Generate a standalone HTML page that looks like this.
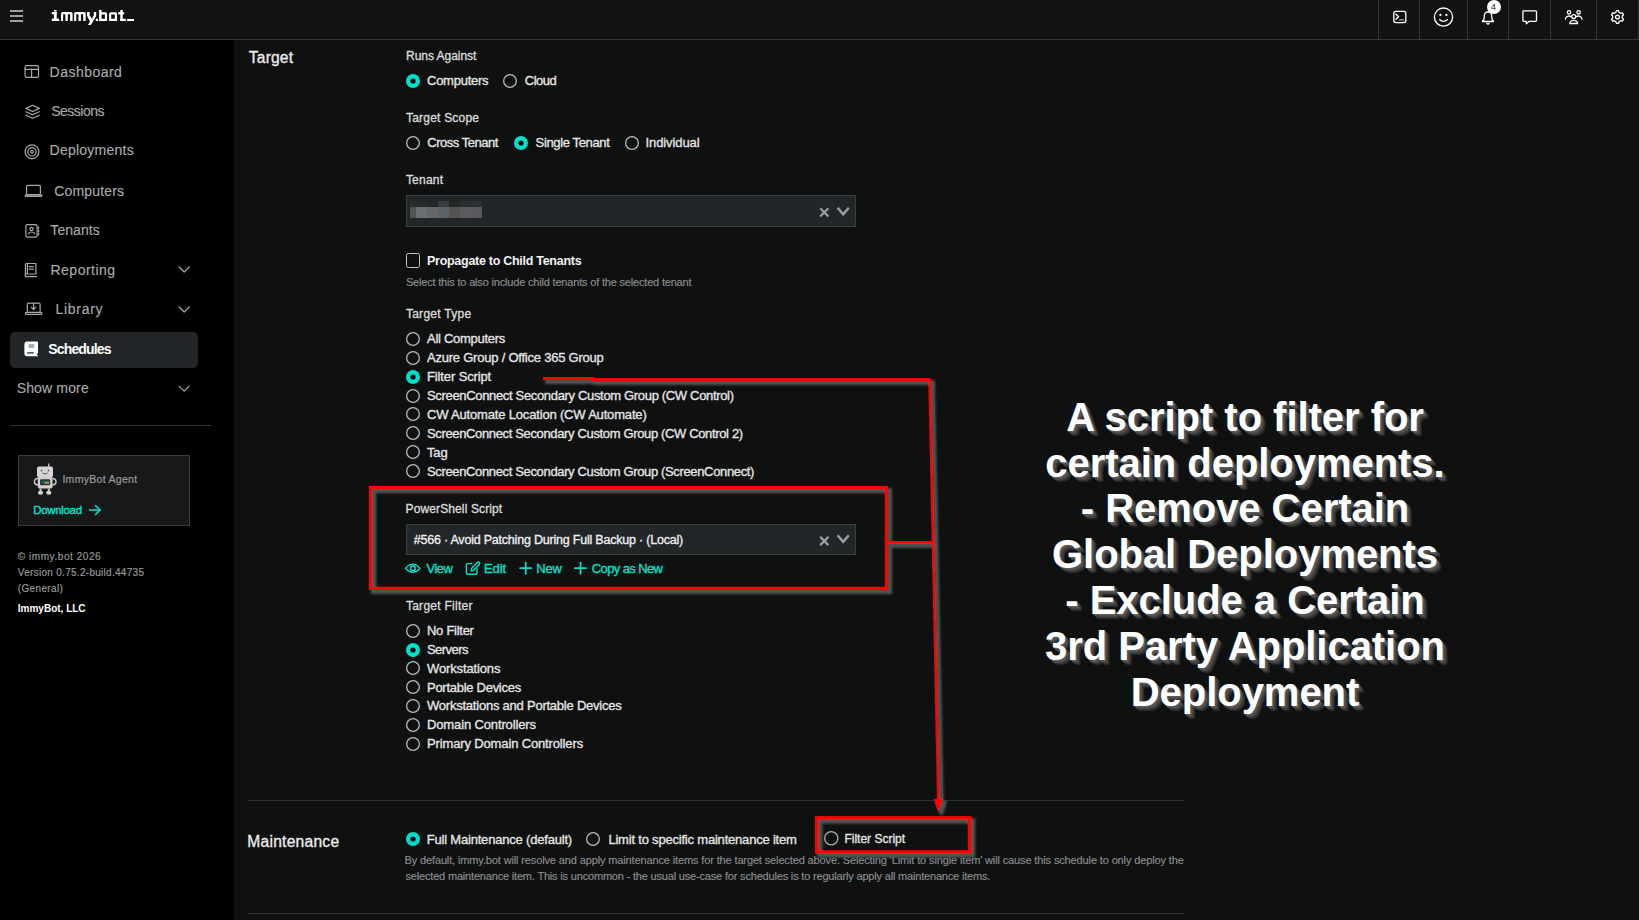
<!DOCTYPE html><html><head><meta charset="utf-8"><style>
html,body{margin:0;padding:0}
body{width:1639px;height:920px;overflow:hidden;position:relative;background:#0f1111;font-family:"Liberation Sans",sans-serif}
.t{position:absolute;white-space:nowrap;font-family:"Liberation Sans",sans-serif}
svg{position:absolute;overflow:visible}
</style></head><body>
<div style='position:absolute;left:0;top:0;width:1639px;height:39px;background:#111313'></div>
<div style='position:absolute;left:0;top:39px;width:1639px;height:1px;background:#333537'></div>
<div style='position:absolute;left:1378px;top:0;width:1px;height:39px;background:#333537'></div>
<div style='position:absolute;left:1419px;top:0;width:1px;height:39px;background:#333537'></div>
<div style='position:absolute;left:1467px;top:0;width:1px;height:39px;background:#333537'></div>
<div style='position:absolute;left:1508px;top:0;width:1px;height:39px;background:#333537'></div>
<div style='position:absolute;left:1550px;top:0;width:1px;height:39px;background:#333537'></div>
<div style='position:absolute;left:1596px;top:0;width:1px;height:39px;background:#333537'></div>
<div style='position:absolute;left:1638px;top:0;width:1px;height:39px;background:#333537'></div>
<svg style='left:0;top:0' width='40' height='39'><g stroke='#e0e0e0' stroke-width='1.4'><line x1='10' y1='11' x2='23' y2='11'/><line x1='10' y1='16' x2='23' y2='16'/><line x1='10' y1='21' x2='23' y2='21'/></g></svg>
<svg style='left:0;top:0' width='140' height='39'><g fill='#ffffff'><rect x='54' y='10' width='2.6' height='1.5'/><rect x='51.8' y='12' width='4.9' height='2.3'/><rect x='53.9' y='12' width='2.8' height='7.5'/><rect x='51.8' y='18.6' width='7.3' height='2.4'/><path d='M61 21 V13.6 a1.6 1.6 0 0 1 1.6 -1.6 H71 a1.6 1.6 0 0 1 1.6 1.6 V21 h-2.5 V14.3 h-2.3 V21 h-2.4 V14.3 h-2.3 V21 z'/><path d='M74.1 21 V13.6 a1.6 1.6 0 0 1 1.6 -1.6 H84.1 a1.6 1.6 0 0 1 1.6 1.6 V21 h-2.5 V14.3 h-2.3 V21 h-2.4 V14.3 h-2.3 V21 z'/><path d='M87 12 h2.6 v3.2 l2.2 3.6 l2 -3.6 V12 h2.4 v3.8 l-3.2 5.6 l-2.2 3.6 h-2.8 l2 -3.6 l-3 -5.6 z'/><rect x='95.8' y='18.7' width='2.2' height='2.3'/><path d='M99.1 10 h2.5 v2.2 h4 a1.5 1.5 0 0 1 1.5 1.5 V21 H99.1 z M101.6 14.4 v4.4 h3.3 v-4.4 z' fill-rule='evenodd'/><path d='M110.6 12.2 h4.9 a1.5 1.5 0 0 1 1.5 1.5 V21 h-7.9 V13.7 a1.5 1.5 0 0 1 1.5 -1.5 z M111.2 14.4 v4.4 h3.6 v-4.4 z' fill-rule='evenodd'/><rect x='120.3' y='10' width='2.4' height='11'/><rect x='118.1' y='12.2' width='6' height='2.2'/><rect x='120.3' y='18.8' width='5.5' height='2.2'/><rect x='127.1' y='19' width='6.9' height='2'/></g></svg>
<svg style='left:1380px;top:0' width='259' height='39' fill='none' stroke='#ffffff' stroke-width='1.3' stroke-linecap='round' stroke-linejoin='round'>
<rect x='13.8' y='11.3' width='12' height='11.3' rx='2'/>
<polyline points='15.9,14.2 18.6,16.7 15.9,19.2'/>
<line x1='19.8' y1='19.8' x2='23.5' y2='19.8' stroke='#bbbbbb'/>
<circle cx='63.5' cy='17.1' r='9.1'/>
<circle cx='60.4' cy='15' r='0.5' fill='#fff'/><circle cx='66.4' cy='15' r='0.5' fill='#fff'/>
<path d='M59.6 19.6 Q63.5 23.2 67.4 19.6'/>
<path d='M102.5 21.5 h11 c-1.3-1.3-1.8-2.6-1.8-4.5 v-1.3 a3.7 3.7 0 0 0 -7.4 0 v1.3 c0 1.9 -0.5 3.2 -1.8 4.5 z'/>
<path d='M106.8 23.3 l1.2 1 l1.2 -1'/>
<path d='M143.7 10.8 h12 a0.8 0.8 0 0 1 0.8 0.8 v9 a0.8 0.8 0 0 1 -0.8 0.8 h-6.8 l-2.6 2.3 v-2.3 h-2.6 a0.8 0.8 0 0 1 -0.8 -0.8 v-9 a0.8 0.8 0 0 1 0.8 -0.8 z'/>
<circle cx='193.7' cy='16.6' r='2'/><path d='M189.8 23.5 a3.9 3.2 0 0 1 7.8 0 z'/>
<circle cx='189' cy='12.3' r='1.7'/><path d='M185.4 19 a3.6 3.4 0 0 1 5.6 -2.4'/>
<circle cx='198.6' cy='12.3' r='1.7'/><path d='M202 19 a3.6 3.4 0 0 0 -5.6 -2.4'/>
<circle cx='237.5' cy='17' r='1.9'/>
</svg>
<svg style='left:0;top:0' width='1639' height='39' fill='none' stroke='#ffffff' stroke-width='1.3' stroke-linejoin='round'><polygon points='1615.90,12.37 1616.39,10.70 1618.61,10.70 1619.10,12.37 1620.71,13.30 1622.40,12.89 1623.51,14.81 1622.31,16.07 1622.31,17.93 1623.51,19.19 1622.40,21.11 1620.71,20.70 1619.10,21.63 1618.61,23.30 1616.39,23.30 1615.90,21.63 1614.29,20.70 1612.60,21.11 1611.49,19.19 1612.69,17.93 1612.69,16.07 1611.49,14.81 1612.60,12.89 1614.29,13.30'/></svg>
<div style='position:absolute;left:1487px;top:-0.5px;width:14px;height:14px;border-radius:50%;background:#ffffff'></div>
<div class='t' style='left:1490.8px;top:2.4px;font-size:9.5px;line-height:9.5px;color:#2a2a2a'>4</div>
<div style='position:absolute;left:0;top:40px;width:234px;height:880px;background:#000'></div>
<svg style='left:0;top:40px' width='234' height='880' fill='none' stroke='#a9a9a9' stroke-width='1.2' stroke-linecap='round' stroke-linejoin='round'>
<g transform='translate(0,-40)'>
<rect x='25.1' y='65.6' width='13.4' height='11.8' rx='1.6'/><line x1='25.1' y1='69.4' x2='38.5' y2='69.4'/><line x1='31.6' y1='69.4' x2='31.6' y2='77.4'/>
<path d='M32.6 105.3 L39.3 108.4 L32.6 111.5 L25.9 108.4 Z'/>
<path d='M25.9 111.7 L32.6 114.8 L39.3 111.7'/>
<path d='M25.9 115.2 L32.6 118.3 L39.3 115.2'/>
<circle cx='32' cy='151.8' r='6.9'/><circle cx='32' cy='151.8' r='4.2'/><circle cx='32' cy='151.8' r='1.3'/>
<rect x='26.6' y='185.3' width='13.8' height='9.2' rx='1.2'/><rect x='25.2' y='194.8' width='16.8' height='1.6' rx='0.8'/>
<rect x='25.9' y='224.6' width='11.2' height='12.6' rx='1.5'/><line x1='38.6' y1='227' x2='38.6' y2='228.6'/><line x1='38.6' y1='230.2' x2='38.6' y2='231.8'/><line x1='38.6' y1='233.4' x2='38.6' y2='235'/>
<circle cx='31.5' cy='228.9' r='1.6'/><path d='M28.5 233.8 a3.2 2.4 0 0 1 6.2 0'/>
<path d='M25.4 274.5 V264.5 a1 1 0 0 1 1 -1 h9.5 v10.5 h-9.5 a1 1 0 0 0 0 2.6 h10.1'/><line x1='27.4' y1='263.5' x2='27.4' y2='273.6'/><line x1='29.2' y1='266.6' x2='33.4' y2='266.6'/><line x1='29.2' y1='269.2' x2='33.4' y2='269.2'/>
<path d='M27.3 311.6 V304.4 a1.2 1.2 0 0 1 1.2 -1.2 h10.4 a1.2 1.2 0 0 1 1.2 1.2 V311.6'/><rect x='25.4' y='312.4' width='16.6' height='2' rx='1'/>
<line x1='33.6' y1='303.4' x2='33.6' y2='309.4'/><polyline points='31.3,307.2 33.6,309.5 35.9,307.2'/>
<polyline points='179.2,267 184.2,272 189.2,267'/>
<polyline points='179.2,307 184.2,312 189.2,307'/>
<polyline points='179.2,386.2 184.2,391.2 189.2,386.2'/>
</g></svg>
<div style='position:absolute;left:10px;top:332px;width:188px;height:36px;border-radius:5px;background:#222527'></div>
<svg style='left:0;top:330px' width='60' height='40'><g transform='translate(0,-330)'>
<path d='M26.8 341.6 h10.4 a0.8 0.8 0 0 1 0.8 0.8 v11.2 h-1 v1.6 h1 v1 h-11 a2.6 2.6 0 0 1 -2.6 -2.6 v-9.4 a2.6 2.6 0 0 1 2.4 -2.6 z' fill='#ffffff'/>
<rect x='28.5' y='344.6' width='5.8' height='0.9' fill='#4a4d4f'/><rect x='28.5' y='346.6' width='5.8' height='0.9' fill='#4a4d4f'/>
<rect x='27.1' y='352.3' width='6.8' height='1.3' rx='0.6' fill='#222527'/>
</g></svg>
<div style='position:absolute;left:10px;top:425px;width:202px;height:1px;background:#2f3133'></div>
<div style='position:absolute;left:18px;top:455px;width:170px;height:69px;border:1px solid #3a3b3d;background:#17181a'></div>
<svg style='left:0;top:455px' width='80' height='50'><g transform='translate(0,-455)'>
<line x1='48.8' y1='463.5' x2='48.8' y2='467.5' stroke='#cfcfcf' stroke-width='1.3'/>
<rect x='37' y='466.6' width='16' height='10.6' rx='2' fill='#d6d6d6'/>
<circle cx='41.6' cy='470.6' r='0.8' fill='#333'/><circle cx='48.4' cy='470.6' r='0.8' fill='#333'/>
<path d='M42.4 473 Q45 475 47.6 473' stroke='#333' stroke-width='0.8' fill='none'/>
<rect x='37.8' y='476.6' width='14.8' height='12' rx='2.2' fill='#d0d0d0'/>
<path d='M38 478.2 q-3.8 0.6 -3.6 4.2 q0.2 2.4 3.6 2.6' stroke='#c4c4c4' stroke-width='1.5' fill='none'/>
<path d='M52.4 478.2 q3.8 0.6 3.6 4.2 q-0.2 2.4 -3.6 2.6' stroke='#c4c4c4' stroke-width='1.5' fill='none'/>
<rect x='40' y='479.3' width='10.2' height='6' rx='1.2' fill='#20393c'/>
<rect x='44.6' y='481.6' width='4.4' height='1.2' fill='#9fbf5a'/><rect x='44.6' y='482.8' width='4.4' height='1.2' fill='#d9584e'/>
<path d='M41.5 483 l1.5 -1.6 l1.2 1' stroke='#4dd0c0' stroke-width='0.6' fill='none'/>
<ellipse cx='40.5' cy='492.8' rx='2.6' ry='2' fill='#d6d6d6'/><ellipse cx='48.8' cy='492.8' rx='2.6' ry='2' fill='#d6d6d6'/>
<rect x='39.5' y='488.5' width='2.2' height='3' fill='#bdbdbd'/><rect x='47.8' y='488.5' width='2.2' height='3' fill='#bdbdbd'/>
</g></svg>
<svg style='left:0;top:500px' width='120' height='20' fill='none' stroke='#00e0c9' stroke-width='1.5' stroke-linecap='round' stroke-linejoin='round'><g transform='translate(0,-500)'>
<line x1='89.6' y1='510' x2='100.2' y2='510'/><polyline points='95.6,505.6 100.2,510 95.6,514.4'/></g></svg>
<svg style='left:404.00px;top:72.00px' width='18' height='18'><circle cx='9.0' cy='9.0' r='7.0' fill='#00e0c9'/><circle cx='9.0' cy='9.0' r='2.6' fill='#000'/></svg>
<svg style='left:501.40px;top:72.00px' width='18' height='18'><circle cx='9.0' cy='9.0' r='6.35' fill='none' stroke='#b6bac0' stroke-width='1.3'/></svg>
<svg style='left:404.00px;top:133.75px' width='18' height='18'><circle cx='9.0' cy='9.0' r='6.35' fill='none' stroke='#b6bac0' stroke-width='1.3'/></svg>
<svg style='left:512.00px;top:133.75px' width='18' height='18'><circle cx='9.0' cy='9.0' r='7.0' fill='#00e0c9'/><circle cx='9.0' cy='9.0' r='2.6' fill='#000'/></svg>
<svg style='left:622.90px;top:133.75px' width='18' height='18'><circle cx='9.0' cy='9.0' r='6.35' fill='none' stroke='#b6bac0' stroke-width='1.3'/></svg>
<svg style='left:404.00px;top:330.00px' width='18' height='18'><circle cx='9.0' cy='9.0' r='6.35' fill='none' stroke='#b6bac0' stroke-width='1.3'/></svg>
<svg style='left:404.00px;top:348.86px' width='18' height='18'><circle cx='9.0' cy='9.0' r='6.35' fill='none' stroke='#b6bac0' stroke-width='1.3'/></svg>
<svg style='left:404.00px;top:367.72px' width='18' height='18'><circle cx='9.0' cy='9.0' r='7.0' fill='#00e0c9'/><circle cx='9.0' cy='9.0' r='2.6' fill='#000'/></svg>
<svg style='left:404.00px;top:386.58px' width='18' height='18'><circle cx='9.0' cy='9.0' r='6.35' fill='none' stroke='#b6bac0' stroke-width='1.3'/></svg>
<svg style='left:404.00px;top:405.44px' width='18' height='18'><circle cx='9.0' cy='9.0' r='6.35' fill='none' stroke='#b6bac0' stroke-width='1.3'/></svg>
<svg style='left:404.00px;top:424.30px' width='18' height='18'><circle cx='9.0' cy='9.0' r='6.35' fill='none' stroke='#b6bac0' stroke-width='1.3'/></svg>
<svg style='left:404.00px;top:443.16px' width='18' height='18'><circle cx='9.0' cy='9.0' r='6.35' fill='none' stroke='#b6bac0' stroke-width='1.3'/></svg>
<svg style='left:404.00px;top:462.02px' width='18' height='18'><circle cx='9.0' cy='9.0' r='6.35' fill='none' stroke='#b6bac0' stroke-width='1.3'/></svg>
<svg style='left:404.00px;top:621.70px' width='18' height='18'><circle cx='9.0' cy='9.0' r='6.35' fill='none' stroke='#b6bac0' stroke-width='1.3'/></svg>
<svg style='left:404.00px;top:640.55px' width='18' height='18'><circle cx='9.0' cy='9.0' r='7.0' fill='#00e0c9'/><circle cx='9.0' cy='9.0' r='2.6' fill='#000'/></svg>
<svg style='left:404.00px;top:659.40px' width='18' height='18'><circle cx='9.0' cy='9.0' r='6.35' fill='none' stroke='#b6bac0' stroke-width='1.3'/></svg>
<svg style='left:404.00px;top:678.25px' width='18' height='18'><circle cx='9.0' cy='9.0' r='6.35' fill='none' stroke='#b6bac0' stroke-width='1.3'/></svg>
<svg style='left:404.00px;top:697.10px' width='18' height='18'><circle cx='9.0' cy='9.0' r='6.35' fill='none' stroke='#b6bac0' stroke-width='1.3'/></svg>
<svg style='left:404.00px;top:715.95px' width='18' height='18'><circle cx='9.0' cy='9.0' r='6.35' fill='none' stroke='#b6bac0' stroke-width='1.3'/></svg>
<svg style='left:404.00px;top:734.80px' width='18' height='18'><circle cx='9.0' cy='9.0' r='6.35' fill='none' stroke='#b6bac0' stroke-width='1.3'/></svg>
<svg style='left:404.00px;top:830.30px' width='18' height='18'><circle cx='9.0' cy='9.0' r='7.0' fill='#00e0c9'/><circle cx='9.0' cy='9.0' r='2.6' fill='#000'/></svg>
<svg style='left:584.00px;top:830.30px' width='18' height='18'><circle cx='9.0' cy='9.0' r='6.35' fill='none' stroke='#b6bac0' stroke-width='1.3'/></svg>
<div style='position:absolute;left:406px;top:195px;width:450px;height:32px;box-sizing:border-box;border:1px solid #3a3e40;background:#222628'></div>
<div style='position:absolute;left:409.8px;top:201px;width:6.199999999999989px;height:6px;background:#2a2e2f'></div>
<div style='position:absolute;left:409.8px;top:207px;width:6.199999999999989px;height:10.7px;background:#4f5452'></div>
<div style='position:absolute;left:416px;top:201px;width:11px;height:6px;background:#272b2c'></div>
<div style='position:absolute;left:416px;top:207px;width:11px;height:10.7px;background:#6a6f72'></div>
<div style='position:absolute;left:427px;top:201px;width:11px;height:6px;background:#232728'></div>
<div style='position:absolute;left:427px;top:207px;width:11px;height:10.7px;background:#666766'></div>
<div style='position:absolute;left:438px;top:201px;width:11px;height:6px;background:#393d40'></div>
<div style='position:absolute;left:438px;top:207px;width:11px;height:10.7px;background:#5c6266'></div>
<div style='position:absolute;left:449px;top:201px;width:11px;height:6px;background:#232728'></div>
<div style='position:absolute;left:449px;top:207px;width:11px;height:10.7px;background:#555450'></div>
<div style='position:absolute;left:460px;top:201px;width:11px;height:6px;background:#2a2e2f'></div>
<div style='position:absolute;left:460px;top:207px;width:11px;height:10.7px;background:#5c5b60'></div>
<div style='position:absolute;left:471px;top:201px;width:11px;height:6px;background:#2e3133'></div>
<div style='position:absolute;left:471px;top:207px;width:11px;height:10.7px;background:#58595b'></div>
<svg style='left:0;top:0' width='1639' height='920' fill='none' stroke='#9d9d9d' stroke-width='2.3' stroke-linecap='butt'><line x1='820.2' y1='208.3' x2='828.4' y2='216.5'/><line x1='828.4' y1='208.3' x2='820.2' y2='216.5'/><polyline points='837.6,207.8 843.2,214.4 848.8,207.8' stroke-width='2.5'/></svg>
<div style='position:absolute;left:406px;top:253px;width:14px;height:15px;box-sizing:border-box;border:1.3px solid #c4c4c4;border-radius:2.5px'></div>
<div style='position:absolute;left:406px;top:524px;width:450px;height:31px;box-sizing:border-box;border:1px solid #3a3e40;background:#222628'></div>
<svg style='left:0;top:0' width='1639' height='920' fill='none' stroke='#9d9d9d' stroke-width='2.3' stroke-linecap='butt'><line x1='820.2' y1='536.9' x2='828.4' y2='545.1'/><line x1='828.4' y1='536.9' x2='820.2' y2='545.1'/><polyline points='837.6,535.3 843.2,541.9 848.8,535.3' stroke-width='2.5'/></svg>
<svg style='left:0;top:0' width='1639' height='920' fill='none' stroke='#00e0c9' stroke-width='1.4' stroke-linecap='round' stroke-linejoin='round'>
<path d='M405.6 568.2 Q412.8 560 420 568.2 Q412.8 576.4 405.6 568.2 Z'/><circle cx='412.8' cy='568.2' r='2.4'/>
<path d='M472 563.6 h-4.6 a1 1 0 0 0 -1 1 v8.6 a1 1 0 0 0 1 1 h8.6 a1 1 0 0 0 1 -1 v-4.6'/>
<path d='M477.4 562.4 a1.4 1.4 0 0 1 2 2 l-5.8 5.8 l-2.6 0.7 l0.7 -2.6 z'/>
<g stroke-width='1.8'><line x1='525.7' y1='562.6' x2='525.7' y2='573.8'/><line x1='520.1' y1='568.2' x2='531.3' y2='568.2'/>
<line x1='580.5' y1='562.6' x2='580.5' y2='573.8'/><line x1='574.9' y1='568.2' x2='586.1' y2='568.2'/></g>
</svg>
<div class='t' style='left:49.60px;top:65.14px;font-size:14px;line-height:14px;font-weight:400;color:#a9a9a9;letter-spacing:0.475px;-webkit-text-stroke:0.15px #a9a9a9'>Dashboard</div>
<div class='t' style='left:51.20px;top:104.34px;font-size:14px;line-height:14px;font-weight:400;color:#a9a9a9;letter-spacing:-0.5px;-webkit-text-stroke:0.15px #a9a9a9'>Sessions</div>
<div class='t' style='left:49.60px;top:143.44px;font-size:14px;line-height:14px;font-weight:400;color:#a9a9a9;letter-spacing:0.24px;-webkit-text-stroke:0.15px #a9a9a9'>Deployments</div>
<div class='t' style='left:54.20px;top:183.74px;font-size:14px;line-height:14px;font-weight:400;color:#a9a9a9;letter-spacing:0.162px;-webkit-text-stroke:0.15px #a9a9a9'>Computers</div>
<div class='t' style='left:50.30px;top:223.14px;font-size:14px;line-height:14px;font-weight:400;color:#a9a9a9;letter-spacing:0.083px;-webkit-text-stroke:0.15px #a9a9a9'>Tenants</div>
<div class='t' style='left:50.50px;top:263.14px;font-size:14px;line-height:14px;font-weight:400;color:#a9a9a9;letter-spacing:0.487px;-webkit-text-stroke:0.15px #a9a9a9'>Reporting</div>
<div class='t' style='left:55.50px;top:301.94px;font-size:14px;line-height:14px;font-weight:400;color:#a9a9a9;letter-spacing:0.717px;-webkit-text-stroke:0.15px #a9a9a9'>Library</div>
<div class='t' style='left:48.30px;top:342.04px;font-size:14px;line-height:14px;font-weight:700;color:#ffffff;letter-spacing:-0.862px;'>Schedules</div>
<div class='t' style='left:16.70px;top:380.94px;font-size:14px;line-height:14px;font-weight:400;color:#a9a9a9;letter-spacing:0.15px;-webkit-text-stroke:0.15px #a9a9a9'>Show more</div>
<div class='t' style='left:62.40px;top:473.91px;font-size:10.5px;line-height:10.5px;font-weight:400;color:#a0a0a0;letter-spacing:0.292px;-webkit-text-stroke:0.15px #a0a0a0'>ImmyBot Agent</div>
<div class='t' style='left:33.20px;top:504.96px;font-size:11.5px;line-height:11.5px;font-weight:400;color:#00e0c9;letter-spacing:-0.329px;-webkit-text-stroke:0.35px #00e0c9'>Download</div>
<div class='t' style='left:17.80px;top:552.03px;font-size:10px;line-height:10px;font-weight:400;color:#9a9a9a;letter-spacing:0.557px;-webkit-text-stroke:0.15px #9a9a9a'>© immy.bot 2026</div>
<div class='t' style='left:17.80px;top:568.03px;font-size:10px;line-height:10px;font-weight:400;color:#9a9a9a;letter-spacing:0.288px;-webkit-text-stroke:0.15px #9a9a9a'>Version 0.75.2-build.44735</div>
<div class='t' style='left:17.80px;top:584.13px;font-size:10px;line-height:10px;font-weight:400;color:#9a9a9a;letter-spacing:0.35px;-webkit-text-stroke:0.15px #9a9a9a'>(General)</div>
<div class='t' style='left:17.80px;top:604.33px;font-size:10px;line-height:10px;font-weight:700;color:#ffffff;letter-spacing:0.0px;'>ImmyBot, LLC</div>
<div class='t' style='left:248.80px;top:49.59px;font-size:15.6px;line-height:15.6px;font-weight:400;color:#ececec;letter-spacing:0.18px;-webkit-text-stroke:0.32px #ececec'>Target</div>
<div class='t' style='left:406.00px;top:50.04px;font-size:12px;line-height:12px;font-weight:400;color:#dcdcdc;letter-spacing:-0.027px;-webkit-text-stroke:0.32px #dcdcdc'>Runs Against</div>
<div class='t' style='left:427.00px;top:74.39px;font-size:13px;line-height:13px;font-weight:400;color:#e6e6e6;letter-spacing:-0.25px;-webkit-text-stroke:0.32px #e6e6e6'>Computers</div>
<div class='t' style='left:524.80px;top:74.39px;font-size:13px;line-height:13px;font-weight:400;color:#e6e6e6;letter-spacing:-0.5px;-webkit-text-stroke:0.32px #e6e6e6'>Cloud</div>
<div class='t' style='left:406.00px;top:112.34px;font-size:12px;line-height:12px;font-weight:400;color:#dcdcdc;letter-spacing:0.209px;-webkit-text-stroke:0.32px #dcdcdc'>Target Scope</div>
<div class='t' style='left:427.30px;top:136.09px;font-size:13px;line-height:13px;font-weight:400;color:#e6e6e6;letter-spacing:-0.482px;-webkit-text-stroke:0.32px #e6e6e6'>Cross Tenant</div>
<div class='t' style='left:535.60px;top:136.09px;font-size:13px;line-height:13px;font-weight:400;color:#e6e6e6;letter-spacing:-0.358px;-webkit-text-stroke:0.32px #e6e6e6'>Single Tenant</div>
<div class='t' style='left:645.60px;top:136.09px;font-size:13px;line-height:13px;font-weight:400;color:#e6e6e6;letter-spacing:-0.111px;-webkit-text-stroke:0.32px #e6e6e6'>Individual</div>
<div class='t' style='left:405.90px;top:173.94px;font-size:12px;line-height:12px;font-weight:400;color:#dcdcdc;letter-spacing:0.22px;-webkit-text-stroke:0.32px #dcdcdc'>Tenant</div>
<div class='t' style='left:427.00px;top:255.41px;font-size:12.5px;line-height:12.5px;font-weight:700;color:#f2f2f2;letter-spacing:-0.28px;'>Propagate to Child Tenants</div>
<div class='t' style='left:405.90px;top:276.68px;font-size:11px;line-height:11px;font-weight:400;color:#8b8e90;letter-spacing:-0.183px;-webkit-text-stroke:0.15px #8b8e90'>Select this to also include child tenants of the selected tenant</div>
<div class='t' style='left:405.90px;top:307.74px;font-size:12px;line-height:12px;font-weight:400;color:#dcdcdc;letter-spacing:0.28px;-webkit-text-stroke:0.32px #dcdcdc'>Target Type</div>
<div class='t' style='left:427.00px;top:332.29px;font-size:13px;line-height:13px;font-weight:400;color:#e6e6e6;letter-spacing:-0.275px;-webkit-text-stroke:0.32px #e6e6e6'>All Computers</div>
<div class='t' style='left:427.00px;top:351.23px;font-size:13px;line-height:13px;font-weight:400;color:#e6e6e6;letter-spacing:-0.224px;-webkit-text-stroke:0.32px #e6e6e6'>Azure Group / Office 365 Group</div>
<div class='t' style='left:427.00px;top:370.17px;font-size:13px;line-height:13px;font-weight:400;color:#e6e6e6;letter-spacing:-0.125px;-webkit-text-stroke:0.32px #e6e6e6'>Filter Script</div>
<div class='t' style='left:427.00px;top:389.11px;font-size:13px;line-height:13px;font-weight:400;color:#e6e6e6;letter-spacing:-0.333px;-webkit-text-stroke:0.32px #e6e6e6'>ScreenConnect Secondary Custom Group (CW Control)</div>
<div class='t' style='left:427.00px;top:408.05px;font-size:13px;line-height:13px;font-weight:400;color:#e6e6e6;letter-spacing:-0.173px;-webkit-text-stroke:0.32px #e6e6e6'>CW Automate Location (CW Automate)</div>
<div class='t' style='left:427.00px;top:426.99px;font-size:13px;line-height:13px;font-weight:400;color:#e6e6e6;letter-spacing:-0.354px;-webkit-text-stroke:0.32px #e6e6e6'>ScreenConnect Secondary Custom Group (CW Control 2)</div>
<div class='t' style='left:427.00px;top:445.93px;font-size:13px;line-height:13px;font-weight:400;color:#e6e6e6;letter-spacing:-0.15px;-webkit-text-stroke:0.32px #e6e6e6'>Tag</div>
<div class='t' style='left:427.00px;top:464.87px;font-size:13px;line-height:13px;font-weight:400;color:#e6e6e6;letter-spacing:-0.353px;-webkit-text-stroke:0.32px #e6e6e6'>ScreenConnect Secondary Custom Group (ScreenConnect)</div>
<div class='t' style='left:405.50px;top:502.84px;font-size:12px;line-height:12px;font-weight:400;color:#dcdcdc;letter-spacing:0.125px;-webkit-text-stroke:0.32px #dcdcdc'>PowerShell Script</div>
<div class='t' style='left:413.70px;top:534.21px;font-size:12.5px;line-height:12.5px;font-weight:400;color:#f0f0f0;letter-spacing:-0.21px;-webkit-text-stroke:0.32px #f0f0f0'>#566 · Avoid Patching During Full Backup · (Local)</div>
<div class='t' style='left:426.50px;top:562.29px;font-size:13px;line-height:13px;font-weight:400;color:#00e0c9;letter-spacing:-0.5px;-webkit-text-stroke:0.32px #00e0c9'>View</div>
<div class='t' style='left:484.00px;top:562.29px;font-size:13px;line-height:13px;font-weight:400;color:#00e0c9;letter-spacing:-0.1px;-webkit-text-stroke:0.32px #00e0c9'>Edit</div>
<div class='t' style='left:536.30px;top:562.29px;font-size:13px;line-height:13px;font-weight:400;color:#00e0c9;letter-spacing:-0.15px;-webkit-text-stroke:0.32px #00e0c9'>New</div>
<div class='t' style='left:591.80px;top:562.29px;font-size:13px;line-height:13px;font-weight:400;color:#00e0c9;letter-spacing:-0.62px;-webkit-text-stroke:0.32px #00e0c9'>Copy as New</div>
<div class='t' style='left:405.90px;top:600.14px;font-size:12px;line-height:12px;font-weight:400;color:#dcdcdc;letter-spacing:0.275px;-webkit-text-stroke:0.32px #dcdcdc'>Target Filter</div>
<div class='t' style='left:427.00px;top:623.99px;font-size:13px;line-height:13px;font-weight:400;color:#e6e6e6;letter-spacing:-0.275px;-webkit-text-stroke:0.32px #e6e6e6'>No Filter</div>
<div class='t' style='left:427.00px;top:642.84px;font-size:13px;line-height:13px;font-weight:400;color:#e6e6e6;letter-spacing:-0.55px;-webkit-text-stroke:0.32px #e6e6e6'>Servers</div>
<div class='t' style='left:427.00px;top:661.69px;font-size:13px;line-height:13px;font-weight:400;color:#e6e6e6;letter-spacing:-0.136px;-webkit-text-stroke:0.32px #e6e6e6'>Workstations</div>
<div class='t' style='left:427.00px;top:680.54px;font-size:13px;line-height:13px;font-weight:400;color:#e6e6e6;letter-spacing:-0.273px;-webkit-text-stroke:0.32px #e6e6e6'>Portable Devices</div>
<div class='t' style='left:427.00px;top:699.39px;font-size:13px;line-height:13px;font-weight:400;color:#e6e6e6;letter-spacing:-0.228px;-webkit-text-stroke:0.32px #e6e6e6'>Workstations and Portable Devices</div>
<div class='t' style='left:427.00px;top:718.24px;font-size:13px;line-height:13px;font-weight:400;color:#e6e6e6;letter-spacing:-0.135px;-webkit-text-stroke:0.32px #e6e6e6'>Domain Controllers</div>
<div class='t' style='left:427.00px;top:737.09px;font-size:13px;line-height:13px;font-weight:400;color:#e6e6e6;letter-spacing:-0.14px;-webkit-text-stroke:0.32px #e6e6e6'>Primary Domain Controllers</div>
<div class='t' style='left:247.30px;top:833.59px;font-size:15.6px;line-height:15.6px;font-weight:400;color:#ececec;letter-spacing:0.25px;-webkit-text-stroke:0.32px #ececec'>Maintenance</div>
<div class='t' style='left:426.70px;top:833.19px;font-size:13px;line-height:13px;font-weight:400;color:#e6e6e6;letter-spacing:-0.192px;-webkit-text-stroke:0.32px #e6e6e6'>Full Maintenance (default)</div>
<div class='t' style='left:608.40px;top:833.19px;font-size:13px;line-height:13px;font-weight:400;color:#e6e6e6;letter-spacing:-0.2px;-webkit-text-stroke:0.32px #e6e6e6'>Limit to specific maintenance item</div>
<div class='t' style='left:404.50px;top:855.08px;font-size:11px;line-height:11px;font-weight:400;color:#8b8e90;letter-spacing:-0.131px;-webkit-text-stroke:0.15px #8b8e90'>By default, immy.bot will resolve and apply maintenance items for the target selected above. Selecting &#x27;Limit to single item&#x27; will cause this schedule to only deploy the</div>
<div class='t' style='left:405.50px;top:870.98px;font-size:11px;line-height:11px;font-weight:400;color:#8b8e90;letter-spacing:-0.181px;-webkit-text-stroke:0.15px #8b8e90'>selected maintenance item. This is uncommon - the usual use-case for schedules is to regularly apply all maintenance items.</div>
<div style='position:absolute;left:248px;top:800px;width:936px;height:1px;background:#2f3234'></div>
<div style='position:absolute;left:248px;top:913px;width:936px;height:1px;background:#2f3234'></div>
<svg style='left:0;top:0' width='1639' height='920'>
<defs><filter id='sh' filterUnits='userSpaceOnUse' x='0' y='0' width='1639' height='920'>
<feMorphology in='SourceAlpha' operator='dilate' radius='0.9' result='d'/><feOffset in='d' dx='3.3' dy='3.3' result='o'/><feGaussianBlur in='o' stdDeviation='1.15' result='b'/><feFlood flood-color='#4e5454'/><feComposite in2='b' operator='in' result='s'/><feMerge><feMergeNode in='s'/><feMergeNode in='SourceGraphic'/></feMerge></filter></defs>
<rect x='818.5' y='819.5' width='149.5' height='31' fill='#0f1111'/>
<g filter='url(#sh)' fill='none' stroke='#ff0000'>
<rect x='370.6' y='487.6' width='515.8' height='100.8' stroke-width='3.2'/>
<rect x='816.75' y='817.85' width='152.8' height='34.2' stroke-width='3.5'/>
<polyline points='543,378.4 592,378.4 592,379.4 931,379.6' stroke-width='3' stroke-linejoin='miter'/>
<line x1='929.6' y1='378' x2='938.4' y2='801' stroke-width='2.6'/>
<line x1='886.5' y1='542.4' x2='932.2' y2='542.4' stroke-width='2.8'/>
<polygon points='933.6,798.8 943,798.8 938.4,811.8' fill='#ff0000' stroke='none'/>
</g></svg>
<svg style='left:821.75px;top:829.45px' width='18.5' height='18.5'><circle cx='9.25' cy='9.25' r='6.6' fill='none' stroke='#b0b0b0' stroke-width='1.3'/></svg>
<div class='t' style='left:844.40px;top:832.54px;font-size:12px;line-height:12px;font-weight:400;color:#e6e6e6;letter-spacing:0.0px;-webkit-text-stroke:0.32px #e6e6e6'>Filter Script</div>
<div class='t' style='left:945px;width:600px;text-align:center;top:396.82px;font-size:40px;line-height:40px;font-weight:700;color:#ffffff;letter-spacing:-0.04px;text-shadow:1px 1px 0.4px #5c5c5c,2px 2px 0.6px #525252,3px 3px 0.8px #464646,4px 4px 1px #383838,5px 5px 1.2px #2a2a2a'>A script to filter for</div>
<div class='t' style='left:945px;width:600px;text-align:center;top:442.62px;font-size:40px;line-height:40px;font-weight:700;color:#ffffff;letter-spacing:-0.04px;text-shadow:1px 1px 0.4px #5c5c5c,2px 2px 0.6px #525252,3px 3px 0.8px #464646,4px 4px 1px #383838,5px 5px 1.2px #2a2a2a'>certain deployments.</div>
<div class='t' style='left:945px;width:600px;text-align:center;top:488.42px;font-size:40px;line-height:40px;font-weight:700;color:#ffffff;letter-spacing:-0.04px;text-shadow:1px 1px 0.4px #5c5c5c,2px 2px 0.6px #525252,3px 3px 0.8px #464646,4px 4px 1px #383838,5px 5px 1.2px #2a2a2a'>- Remove Certain</div>
<div class='t' style='left:945px;width:600px;text-align:center;top:534.22px;font-size:40px;line-height:40px;font-weight:700;color:#ffffff;letter-spacing:-0.04px;text-shadow:1px 1px 0.4px #5c5c5c,2px 2px 0.6px #525252,3px 3px 0.8px #464646,4px 4px 1px #383838,5px 5px 1.2px #2a2a2a'>Global Deployments</div>
<div class='t' style='left:945px;width:600px;text-align:center;top:580.02px;font-size:40px;line-height:40px;font-weight:700;color:#ffffff;letter-spacing:-0.04px;text-shadow:1px 1px 0.4px #5c5c5c,2px 2px 0.6px #525252,3px 3px 0.8px #464646,4px 4px 1px #383838,5px 5px 1.2px #2a2a2a'>- Exclude a Certain</div>
<div class='t' style='left:945px;width:600px;text-align:center;top:625.82px;font-size:40px;line-height:40px;font-weight:700;color:#ffffff;letter-spacing:-0.04px;text-shadow:1px 1px 0.4px #5c5c5c,2px 2px 0.6px #525252,3px 3px 0.8px #464646,4px 4px 1px #383838,5px 5px 1.2px #2a2a2a'>3rd Party Application</div>
<div class='t' style='left:945px;width:600px;text-align:center;top:671.62px;font-size:40px;line-height:40px;font-weight:700;color:#ffffff;letter-spacing:-0.04px;text-shadow:1px 1px 0.4px #5c5c5c,2px 2px 0.6px #525252,3px 3px 0.8px #464646,4px 4px 1px #383838,5px 5px 1.2px #2a2a2a'>Deployment</div>
</body></html>
